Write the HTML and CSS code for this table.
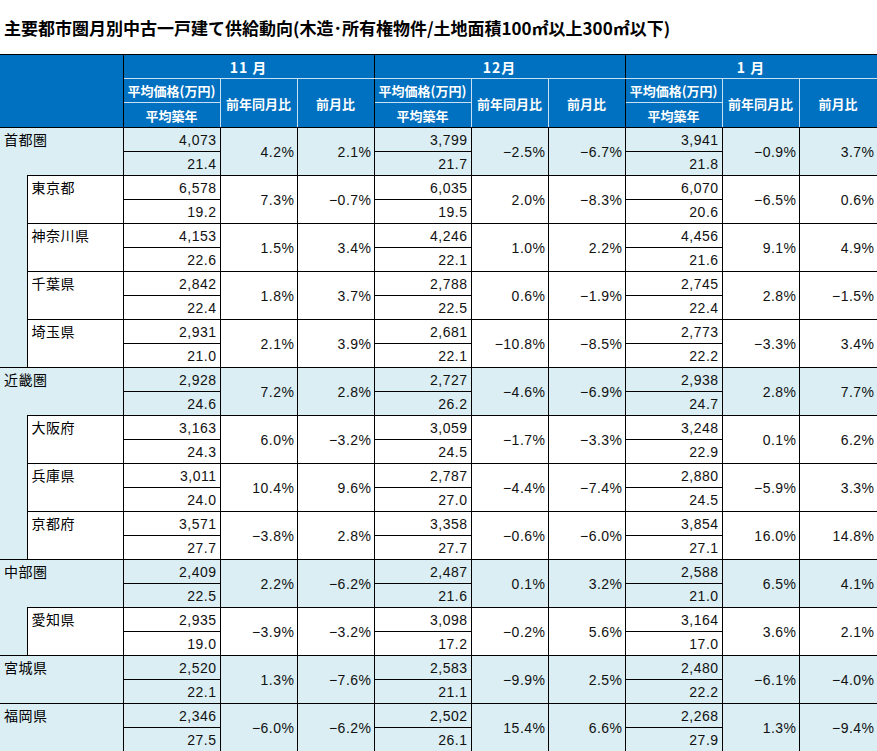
FILE: index.html
```html
<!DOCTYPE html>
<html lang="ja">
<head>
<meta charset="utf-8">
<title>主要都市圏月別中古一戸建て供給動向</title>
<link rel="stylesheet" href="styles.css">
</head>
<body>
<div class="title">主要都市圏月別中古一戸建て供給動向(木造･所有権物件/土地面積100㎡以上300㎡以下)</div>
<table class="tbl">
<colgroup>
<col class="c-ind"><col class="c-name">
<col class="c-pr"><col class="c-pc"><col class="c-pc">
<col class="c-pr"><col class="c-pc"><col class="c-pc">
<col class="c-pr"><col class="c-pc"><col class="c-pc-last">
</colgroup>
<thead>
<tr class="hr1">
<th class="blank ge" colspan="2" rowspan="3"></th>
<th class="month ge" colspan="3">11 月</th>
<th class="month ge" colspan="3">12月</th>
<th class="month" colspan="3">1 月</th>
</tr>
<tr class="hr2">
<th class="sub">平均価格(万円)</th><th class="sub hb" rowspan="2">前年同月比</th><th class="sub hb ge" rowspan="2">前月比</th>
<th class="sub">平均価格(万円)</th><th class="sub hb" rowspan="2">前年同月比</th><th class="sub hb ge" rowspan="2">前月比</th>
<th class="sub">平均価格(万円)</th><th class="sub hb" rowspan="2">前年同月比</th><th class="sub hb" rowspan="2">前月比</th>
</tr>
<tr class="hr3">
<th class="sub hb">平均築年</th>
<th class="sub hb">平均築年</th>
<th class="sub hb">平均築年</th>
</tr>
</thead>
<tbody>
<tr class="reg"><td class="name" colspan="2" rowspan="2">首都圏</td><td class="pr">4,073</td><td class="pc" rowspan="2">4.2%</td><td class="pc" rowspan="2">2.1%</td><td class="pr">3,799</td><td class="pc" rowspan="2">−2.5%</td><td class="pc" rowspan="2">−6.7%</td><td class="pr">3,941</td><td class="pc" rowspan="2">−0.9%</td><td class="pc" rowspan="2">3.7%</td></tr>
<tr class="reg"><td class="pr">21.4</td><td class="pr">21.7</td><td class="pr">21.8</td></tr>

<tr><td class="ind" rowspan="8"></td><td class="name" rowspan="2">東京都</td><td class="pr">6,578</td><td class="pc" rowspan="2">7.3%</td><td class="pc" rowspan="2">−0.7%</td><td class="pr">6,035</td><td class="pc" rowspan="2">2.0%</td><td class="pc" rowspan="2">−8.3%</td><td class="pr">6,070</td><td class="pc" rowspan="2">−6.5%</td><td class="pc" rowspan="2">0.6%</td></tr>
<tr><td class="pr">19.2</td><td class="pr">19.5</td><td class="pr">20.6</td></tr>
<tr><td class="name" rowspan="2">神奈川県</td><td class="pr">4,153</td><td class="pc" rowspan="2">1.5%</td><td class="pc" rowspan="2">3.4%</td><td class="pr">4,246</td><td class="pc" rowspan="2">1.0%</td><td class="pc" rowspan="2">2.2%</td><td class="pr">4,456</td><td class="pc" rowspan="2">9.1%</td><td class="pc" rowspan="2">4.9%</td></tr>
<tr><td class="pr">22.6</td><td class="pr">22.1</td><td class="pr">21.6</td></tr>
<tr><td class="name" rowspan="2">千葉県</td><td class="pr">2,842</td><td class="pc" rowspan="2">1.8%</td><td class="pc" rowspan="2">3.7%</td><td class="pr">2,788</td><td class="pc" rowspan="2">0.6%</td><td class="pc" rowspan="2">−1.9%</td><td class="pr">2,745</td><td class="pc" rowspan="2">2.8%</td><td class="pc" rowspan="2">−1.5%</td></tr>
<tr><td class="pr">22.4</td><td class="pr">22.5</td><td class="pr">22.4</td></tr>
<tr><td class="name" rowspan="2">埼玉県</td><td class="pr">2,931</td><td class="pc" rowspan="2">2.1%</td><td class="pc" rowspan="2">3.9%</td><td class="pr">2,681</td><td class="pc" rowspan="2">−10.8%</td><td class="pc" rowspan="2">−8.5%</td><td class="pr">2,773</td><td class="pc" rowspan="2">−3.3%</td><td class="pc" rowspan="2">3.4%</td></tr>
<tr><td class="pr">21.0</td><td class="pr">22.1</td><td class="pr">22.2</td></tr>

<tr class="reg"><td class="name" colspan="2" rowspan="2">近畿圏</td><td class="pr">2,928</td><td class="pc" rowspan="2">7.2%</td><td class="pc" rowspan="2">2.8%</td><td class="pr">2,727</td><td class="pc" rowspan="2">−4.6%</td><td class="pc" rowspan="2">−6.9%</td><td class="pr">2,938</td><td class="pc" rowspan="2">2.8%</td><td class="pc" rowspan="2">7.7%</td></tr>
<tr class="reg"><td class="pr">24.6</td><td class="pr">26.2</td><td class="pr">24.7</td></tr>

<tr><td class="ind" rowspan="6"></td><td class="name" rowspan="2">大阪府</td><td class="pr">3,163</td><td class="pc" rowspan="2">6.0%</td><td class="pc" rowspan="2">−3.2%</td><td class="pr">3,059</td><td class="pc" rowspan="2">−1.7%</td><td class="pc" rowspan="2">−3.3%</td><td class="pr">3,248</td><td class="pc" rowspan="2">0.1%</td><td class="pc" rowspan="2">6.2%</td></tr>
<tr><td class="pr">24.3</td><td class="pr">24.5</td><td class="pr">22.9</td></tr>
<tr><td class="name" rowspan="2">兵庫県</td><td class="pr">3,011</td><td class="pc" rowspan="2">10.4%</td><td class="pc" rowspan="2">9.6%</td><td class="pr">2,787</td><td class="pc" rowspan="2">−4.4%</td><td class="pc" rowspan="2">−7.4%</td><td class="pr">2,880</td><td class="pc" rowspan="2">−5.9%</td><td class="pc" rowspan="2">3.3%</td></tr>
<tr><td class="pr">24.0</td><td class="pr">27.0</td><td class="pr">24.5</td></tr>
<tr><td class="name" rowspan="2">京都府</td><td class="pr">3,571</td><td class="pc" rowspan="2">−3.8%</td><td class="pc" rowspan="2">2.8%</td><td class="pr">3,358</td><td class="pc" rowspan="2">−0.6%</td><td class="pc" rowspan="2">−6.0%</td><td class="pr">3,854</td><td class="pc" rowspan="2">16.0%</td><td class="pc" rowspan="2">14.8%</td></tr>
<tr><td class="pr">27.7</td><td class="pr">27.7</td><td class="pr">27.1</td></tr>

<tr class="reg"><td class="name" colspan="2" rowspan="2">中部圏</td><td class="pr">2,409</td><td class="pc" rowspan="2">2.2%</td><td class="pc" rowspan="2">−6.2%</td><td class="pr">2,487</td><td class="pc" rowspan="2">0.1%</td><td class="pc" rowspan="2">3.2%</td><td class="pr">2,588</td><td class="pc" rowspan="2">6.5%</td><td class="pc" rowspan="2">4.1%</td></tr>
<tr class="reg"><td class="pr">22.5</td><td class="pr">21.6</td><td class="pr">21.0</td></tr>

<tr><td class="ind" rowspan="2"></td><td class="name" rowspan="2">愛知県</td><td class="pr">2,935</td><td class="pc" rowspan="2">−3.9%</td><td class="pc" rowspan="2">−3.2%</td><td class="pr">3,098</td><td class="pc" rowspan="2">−0.2%</td><td class="pc" rowspan="2">5.6%</td><td class="pr">3,164</td><td class="pc" rowspan="2">3.6%</td><td class="pc" rowspan="2">2.1%</td></tr>
<tr><td class="pr">19.0</td><td class="pr">17.2</td><td class="pr">17.0</td></tr>

<tr class="reg"><td class="name" colspan="2" rowspan="2">宮城県</td><td class="pr">2,520</td><td class="pc" rowspan="2">1.3%</td><td class="pc" rowspan="2">−7.6%</td><td class="pr">2,583</td><td class="pc" rowspan="2">−9.9%</td><td class="pc" rowspan="2">2.5%</td><td class="pr">2,480</td><td class="pc" rowspan="2">−6.1%</td><td class="pc" rowspan="2">−4.0%</td></tr>
<tr class="reg"><td class="pr">22.1</td><td class="pr">21.1</td><td class="pr">22.2</td></tr>

<tr class="reg"><td class="name" colspan="2" rowspan="2">福岡県</td><td class="pr">2,346</td><td class="pc" rowspan="2">−6.0%</td><td class="pc" rowspan="2">−6.2%</td><td class="pr">2,502</td><td class="pc" rowspan="2">15.4%</td><td class="pc" rowspan="2">6.6%</td><td class="pr">2,268</td><td class="pc" rowspan="2">1.3%</td><td class="pc" rowspan="2">−9.4%</td></tr>
<tr class="reg"><td class="pr">27.5</td><td class="pr">26.1</td><td class="pr">27.9</td></tr>
</tbody>
</table>
</body>
</html>
```
FILE: styles.css
```css
html, body {
  margin: 0;
  padding: 0;
  background: #ffffff;
}

body {
  font-family: "Noto Sans CJK JP", "Liberation Sans", sans-serif;
  color: #000;
}

.title {
  height: 54px;
  box-sizing: border-box;
  padding: 16px 0 0 4px;
  font-size: 17px;
  line-height: 24px;
  font-weight: bold;
  white-space: nowrap;
}

.tbl {
  border-collapse: collapse;
  table-layout: fixed;
  width: 877px;
}

.c-ind { width: 27px; }
.c-name { width: 96px; }
.c-pr { width: 97px; }
.c-pc { width: 77px; }
.c-pc-last { width: 78px; }

.tbl th {
  background: #0070c0;
  color: #ffffff;
  font-weight: bold;
  padding: 0;
  border: 1px solid #c8e0f4;
  text-align: center;
  vertical-align: middle;
  white-space: nowrap;
}

.hr1 th { border-top: 1px solid #000; height: 23px; }
.hr2 th { height: 23px; }
.hr3 th { height: 24px; }

.tbl th.ge { border-right: 1px solid #000; }
.tbl th.hb { border-bottom: 1px solid #000; }
.tbl th.blank { border-bottom: 1px solid #000; border-left: none; }

.month {
  font-size: 14px;
  letter-spacing: 1px;
}

.sub {
  font-size: 13px;
  line-height: 15px;
}

.tbl td {
  border: 1px solid #000;
  padding: 0;
  height: 23px;
  font-size: 14px;
  line-height: 16px;
  white-space: nowrap;
  background: #ffffff;
}

.tbl tr.reg td { background: #daeef3; }

.tbl td.ind {
  background: #daeef3;
  border-top-style: hidden;
  border-left: none;
}

.tbl td.name {
  vertical-align: top;
  padding: 3px 0 0 4px;
  letter-spacing: 0.5px;
}

.tbl tr.reg td.name { border-left: none; }

.tbl td.pr, .tbl td.pc {
  font-family: "Liberation Sans", sans-serif;
  text-align: right;
  vertical-align: middle;
  letter-spacing: 0.5px;
  color: #111;
}

.tbl td.pr { padding-right: 3px; }
.tbl td.pc { padding-right: 2px; }
```
